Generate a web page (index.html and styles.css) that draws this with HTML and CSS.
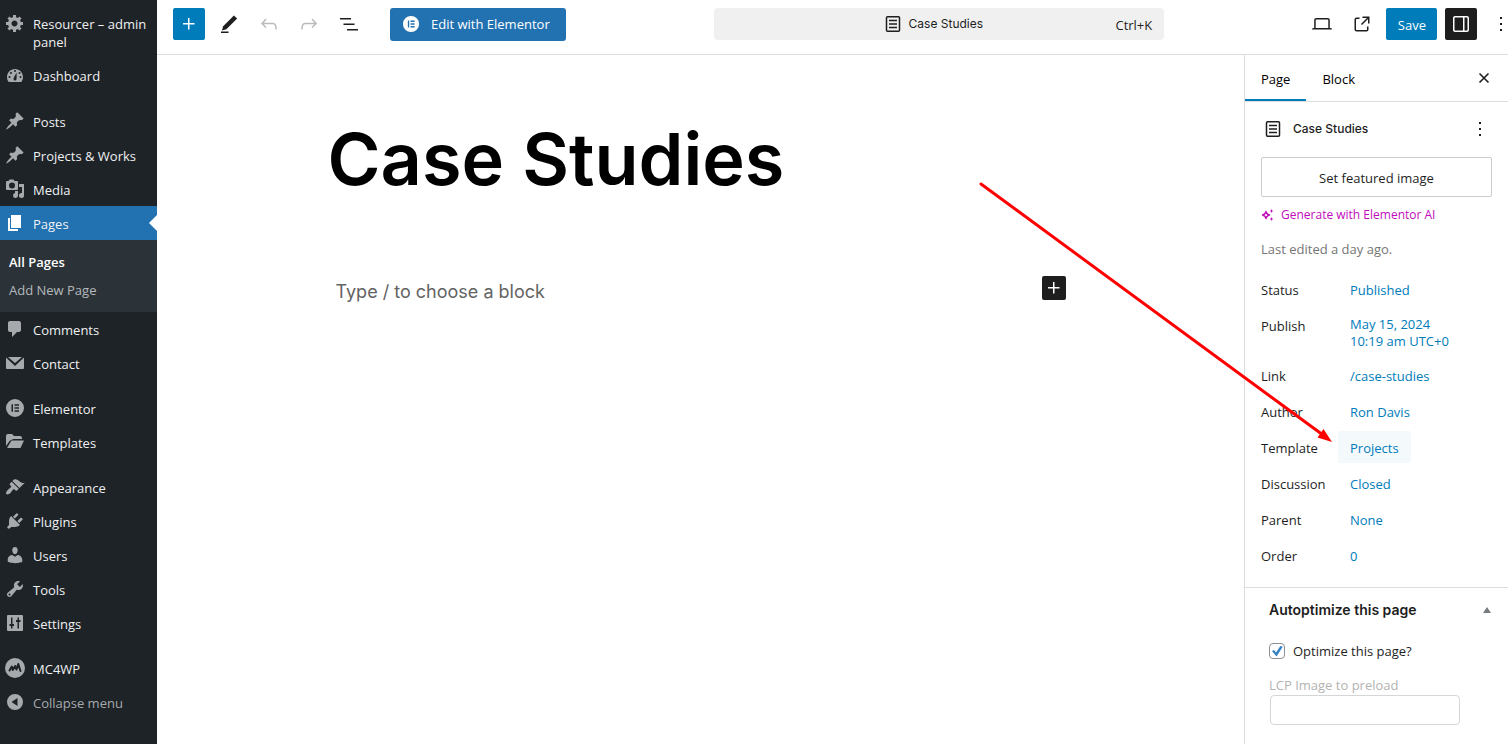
FILE: index.html
```html
<!DOCTYPE html>
<html lang="en">
<head>
<meta charset="utf-8">
<title>Edit Page: Case Studies</title>
<link rel="stylesheet" href="styles.css">
</head>
<body>
<svg class="defs" aria-hidden="true">
  <symbol id="pin" viewBox="0 0 20 20"><path d="M10.44 3.02l1.82-1.82 6.36 6.35-1.83 1.82c-1.05-.68-2.48-.57-3.41.36l-.75.75c-.92.93-1.04 2.35-.35 3.41l-1.83 1.82-2.41-2.41-2.8 2.79c-.42.42-3.38 2.71-3.8 2.29s1.86-3.39 2.28-3.81l2.79-2.79L4.1 9.36l1.83-1.82c1.05.69 2.48.57 3.4-.36l.75-.75c.93-.92 1.05-2.35.36-3.41z"/></symbol>
  <symbol id="page" viewBox="0 0 24 24"><path fill="none" stroke="currentColor" stroke-width="1.5" d="M6.500 4.750h11a1 1 0 0 1 1 1v12.500a1 1 0 0 1-1 1h-11a1 1 0 0 1-1-1V5.750a1 1 0 0 1 1-1zM8 8.500h8M8 12h8M8 15.500h8"/></symbol>
  <symbol id="kebab" viewBox="0 0 24 24"><path d="M13 19h-2v-2h2v2zm0-6h-2v-2h2v2zm0-6h-2V5h2v2z"/></symbol>
  <symbol id="plus" viewBox="0 0 24 24"><path d="M11 12.500V17.500H12.500V12.500H17.500V11H12.500V6H11V11H6V12.500H11Z"/></symbol>
  <symbol id="elementor" viewBox="0 0 20 20"><path fill-rule="evenodd" d="M10 1a9 9 0 1 0 0 18 9 9 0 0 0 0-18zM6.500 6.200h1.500v7.600H6.500zM9.500 6.200h4.500v1.500H9.500zM9.500 9.250h4.500v1.500H9.500zM9.500 12.300h4.500v1.500H9.500z"/></symbol>
</svg>

<nav class="menu" aria-label="Main menu">
  <a class="item site" href="#"><svg viewBox="0 0 20 20"><path fill-rule="evenodd" d="M18 12h-2.180c-.17.700-.44 1.350-.81 1.930l1.540 1.540-2.100 2.100-1.540-1.540c-.58.360-1.230.630-1.910.790V19H8v-2.180c-.68-.160-1.330-.430-1.910-.790l-1.540 1.540-2.120-2.120 1.540-1.540c-.36-.580-.63-1.230-.79-1.910H1V9.030h2.170c.16-.7.440-1.350.8-1.940L2.430 5.550l2.100-2.100 1.540 1.540c.58-.37 1.240-.64 1.930-.81V2h3v2.180c.68.160 1.330.430 1.910.790l1.540-1.540 2.120 2.120-1.540 1.540c.36.590.64 1.240.8 1.940H18V12zm-8.500 1.500c1.660 0 3-1.340 3-3s-1.340-3-3-3-3 1.340-3 3 1.340 3 3 3z"/></svg><span>Resourcer – admin panel</span></a>
  <a class="item" href="#"><svg viewBox="0 0 20 20"><path fill-rule="evenodd" d="M3.760 17h12.480c1.100-1.370 1.760-3.110 1.760-5 0-4.420-3.580-8-8-8s-8 3.580-8 8c0 1.890.66 3.630 1.760 5zM9 6a1 1 0 1 1 2 0 1 1 0 0 1-2 0zM5 8a1 1 0 1 1 2 0 1 1 0 0 1-2 0zm3.500 6c0-1.300 1.500-3 3-6.500.3 3.500.2 5.500 0 6.500a1.500 1.500 0 0 1-3 0zM13.500 8a1 1 0 1 1 2 0 1 1 0 0 1-2 0zM3.500 12a1 1 0 1 1 2 0 1 1 0 0 1-2 0zm11 0a1 1 0 1 1 2 0 1 1 0 0 1-2 0z"/></svg><span>Dashboard</span></a>
  <a class="item gap" href="#"><svg><use href="#pin"/></svg><span>Posts</span></a>
  <a class="item" href="#"><svg><use href="#pin"/></svg><span>Projects &amp; Works</span></a>
  <a class="item" href="#"><svg viewBox="0 0 20 20"><path fill-rule="evenodd" d="M2 2h1.500l1-1.500h4L9.500 2H12a1 1 0 0 1 1 1v7a1 1 0 0 1-1 1H2a1 1 0 0 1-1-1V3a1 1 0 0 1 1-1zm5 1.500a3 3 0 1 0 0 6 3 3 0 0 0 0-6zM14 5h5v11.500a2.500 2.500 0 1 1-2.500-2.500h.5V8h-3zM10 12h3v4.500a2.500 2.500 0 1 1-3-2.400z"/></svg><span>Media</span></a>
  <a class="item current" href="#"><svg viewBox="0 0 20 20"><path d="M6 15V2h10v13H6zm-1 1h8v2H3V5h2v11z"/></svg><span>Pages</span></a>
  <div class="submenu">
    <a class="active" href="#">All Pages</a>
    <a href="#">Add New Page</a>
  </div>
  <a class="item" href="#"><svg viewBox="0 0 20 20"><path d="M5 2h9c1.100 0 2 .9 2 2v7c0 1.100-.9 2-2 2h-2l-5 5v-5H5c-1.100 0-2-.9-2-2V4c0-1.100.9-2 2-2z"/></svg><span>Comments</span></a>
  <a class="item" href="#"><svg viewBox="0 0 20 20"><path d="M3 4h14l-7 6zM1 4.500l9 8.500 9-8.500V15a1 1 0 0 1-1 1H2a1 1 0 0 1-1-1z"/></svg><span>Contact</span></a>
  <a class="item gap" href="#"><svg><use href="#elementor"/></svg><span>Elementor</span></a>
  <a class="item" href="#"><svg viewBox="0 0 20 20"><path d="M1 14V4a2 2 0 0 1 2-2h4l2 2h6a2 2 0 0 1 2 2v1H8.500L5 8.500zM2 16l4.500-7.500H19L15.500 16z"/></svg><span>Templates</span></a>
  <a class="item gap" href="#"><svg viewBox="0 0 20 20"><path d="M14.480 11.060L7.410 3.990l1.500-1.500c.5-.56 2.300-.47 3.510.32 1.210.8 1.430 1.280 2.910 2.100 1.180.64 2.450 1.260 4.450.85zm-.71.710L6.700 4.700 4.930 6.470c-.39.390-.39 1.020 0 1.410l1.060 1.060c.39.390.39 1.030 0 1.420-.6.600-1.430 1.110-2.210 1.690-.35.260-.7.530-1.010.840C1.430 14.230.4 16.080 1.400 17.070c.990 1 2.840-.03 4.180-1.360.31-.31.580-.66.850-1.020.57-.78 1.080-1.610 1.690-2.210.39-.39 1.020-.39 1.410 0l1.060 1.060c.39.390 1.020.39 1.410 0z"/></svg><span>Appearance</span></a>
  <a class="item" href="#"><svg viewBox="0 0 20 20"><path d="M13.110 4.360L9.870 7.600 8 5.730l3.240-3.240c.35-.34 1.050-.2 1.560.32.520.51.660 1.210.31 1.550zm-8 1.770l.91-1.120 9.010 9.010-1.190.84c-.71.710-2.630 1.160-3.820 1.160H6.140L4.900 17.260c-.59.590-1.540.59-2.120 0-.59-.58-.59-1.530 0-2.120l1.240-1.240v-3.880c0-1.130.4-3.190 1.090-3.890zm7.260 3.970l3.240-3.240c.34-.35 1.040-.21 1.550.31.520.51.660 1.210.31 1.550l-3.240 3.250z"/></svg><span>Plugins</span></a>
  <a class="item" href="#"><svg viewBox="0 0 20 20"><path d="M10 9.250c-2.270 0-2.730-3.440-2.730-3.440C7 4.020 7.820 2 9.970 2c2.160 0 2.980 2.020 2.710 3.810 0 0-.41 3.440-2.680 3.440zm0 2.570L12.720 10c2.390 0 4.520 2.330 4.520 4.530v2.490s-3.650 1.130-7.240 1.130c-3.650 0-7.240-1.130-7.240-1.130v-2.490c0-2.250 1.940-4.480 4.470-4.480z"/></svg><span>Users</span></a>
  <a class="item" href="#"><svg viewBox="0 0 20 20"><path d="M16.680 9.770c-1.340 1.340-3.300 1.670-4.950.99l-5.410 6.520c-.99.990-2.590.99-3.580 0s-.99-2.590 0-3.570l6.520-5.420c-.68-1.650-.35-3.610.99-4.950 1.280-1.280 3.120-1.620 4.720-1.060l-2.890 2.890 2.820 2.820 2.860-2.870c.53 1.580.18 3.390-1.080 4.650zM3.810 16.210c.4.390 1.040.39 1.430 0 .4-.4.400-1.040 0-1.430-.39-.4-1.030-.4-1.430 0-.39.390-.39 1.030 0 1.430z"/></svg><span>Tools</span></a>
  <a class="item" href="#"><svg viewBox="0 0 20 20"><path fill-rule="evenodd" d="M18 17V3a1 1 0 0 0-1-1H3a1 1 0 0 0-1 1v14a1 1 0 0 0 1 1h14a1 1 0 0 0 1-1zM6 4.500h1.500V11H9v2H7.500v2.500H6V13H4.500v-2H6zM12.500 4.500H14V7h1.500v2H14v6.500h-1.500V9H11V7h1.500z"/></svg><span>Settings</span></a>
  <a class="item gap" href="#"><svg viewBox="0 0 20 20"><circle cx="10" cy="10" r="10"/><path class="ink" d="M4.500 12.500L6.800 8.500l1 3.500 2.400-4 1.300 3.500L13.300 6l2.200 7"/></svg><span>MC4WP</span></a>
  <button class="item collapse" type="button"><svg viewBox="0 0 20 20"><path fill-rule="evenodd" d="M10 2a8 8 0 1 0 0 16 8 8 0 0 0 0-16zm2.500 4v8L6.500 10z"/></svg><span>Collapse menu</span></button>
</nav>

<div class="editor">
  <header class="topbar">
    <div class="tools">
      <button class="icon-btn primary" type="button" aria-label="Add block"><svg><use href="#plus"/></svg></button>
      <button class="icon-btn" type="button" aria-label="Tools"><svg viewBox="0 0 24 24"><path d="M20.100 6.600L16.900 3.500 6.200 14.200l-1.300 4.400 4.500-1.300z"/><path d="M4 19.500h7.500V21H4z"/></svg></button>
      <button class="icon-btn faded" type="button" aria-label="Undo"><svg viewBox="0 0 24 24"><path d="M18.300 11.700c-.6-.6-1.400-.9-2.300-.9H6.700l2.900-3.300-1.100-1-4.500 5L8.500 16l1-1-2.700-2.700H16c.5 0 .9.200 1.300.5 1 1 1 3.400 1 4.500v.3h1.500v-.2c0-1.500 0-4.300-1.500-5.700z"/></svg></button>
      <button class="icon-btn faded" type="button" aria-label="Redo"><svg viewBox="0 0 24 24"><path d="M15.600 6.500l-1.100 1 2.900 3.300H8c-.9 0-1.700.3-2.300.9-1.400 1.500-1.400 4.200-1.400 5.600v.2h1.500v-.3c0-1.100 0-3.500 1-4.500.3-.3.700-.5 1.300-.5h9.200L14.500 15l1.100 1.100 4.600-4.600-4.600-5z"/></svg></button>
      <button class="icon-btn" type="button" aria-label="Document overview"><svg viewBox="0 0 24 24"><path d="M3 6h11v1.500H3V6Zm3.500 5.500h11V13h-11v-1.500ZM21 17H10v1.500h11V17Z"/></svg></button>
    </div>
    <button class="elementor-btn" type="button"><svg><use href="#elementor"/></svg><span>Edit with Elementor</span></button>
    <button class="command" type="button"><span class="command-title"><svg><use href="#page"/></svg>Case Studies</span><span class="shortcut">Ctrl+K</span></button>
    <div class="actions">
      <button class="icon-btn" type="button" aria-label="View"><svg viewBox="0 0 24 24"><path fill-rule="evenodd" d="M20.500 16h-.7V8c0-1.100-.9-2-2-2H6.200c-1.100 0-2 .9-2 2v8h-.7c-.8 0-1.500.7-1.500 1.500h20c0-.8-.7-1.500-1.500-1.500zM5.700 8c0-.3.2-.5.500-.5h11.600c.3 0 .5.200.5.500v8H5.700V8z"/></svg></button>
      <button class="icon-btn" type="button" aria-label="View page"><svg viewBox="0 0 24 24"><path d="M19.500 4.500h-7V6h4.440l-5.970 5.970 1.060 1.060L18 7.060v4.440h1.500v-7Zm-13 1a2 2 0 0 0-2 2v10a2 2 0 0 0 2 2h10a2 2 0 0 0 2-2v-3H17v3a.5.500 0 0 1-.5.500h-10a.5.500 0 0 1-.5-.5v-10a.5.500 0 0 1 .5-.5h3V5.500h-3Z"/></svg></button>
      <button class="save" type="button">Save</button>
      <button class="icon-btn dark" type="button" aria-label="Settings"><svg viewBox="0 0 24 24"><path fill-rule="evenodd" d="M18 4H6c-1.100 0-2 .9-2 2v12c0 1.100.9 2 2 2h12c1.100 0 2-.9 2-2V6c0-1.100-.9-2-2-2zm-4 14.500H6c-.3 0-.5-.2-.5-.5V6c0-.3.200-.5.500-.5h8v13zm4.500-.5c0 .3-.2.500-.5.500h-2.500v-13H18c.3 0 .5.200.5.500v12z"/></svg></button>
      <button class="icon-btn" type="button" aria-label="Options"><svg><use href="#kebab"/></svg></button>
    </div>
  </header>

  <div class="body">
    <main class="canvas">
      <div class="content">
        <h1>Case Studies</h1>
        <div class="block">
          <p>Type / to choose a block</p>
          <button class="add-block" type="button" aria-label="Add block"><svg><use href="#plus"/></svg></button>
        </div>
      </div>
    </main>

    <aside class="panel">
      <div class="tabs">
        <button class="tab selected" type="button">Page</button>
        <button class="tab" type="button">Block</button>
        <button class="icon-btn close" type="button" aria-label="Close settings"><svg viewBox="0 0 24 24"><path fill="none" stroke="currentColor" stroke-width="1.600" d="M7.500 7.500l9 9M16.500 7.500l-9 9"/></svg></button>
      </div>
      <section class="summary">
        <div class="card">
          <svg><use href="#page"/></svg><h2>Case Studies</h2>
          <button class="icon-btn" type="button" aria-label="Actions"><svg><use href="#kebab"/></svg></button>
        </div>
        <button class="featured" type="button">Set featured image</button>
        <button class="ai" type="button"><svg viewBox="0 0 14 14"><path fill="none" stroke="currentColor" stroke-width="1.300" stroke-linejoin="round" d="M5 3.500c.4 2 1.300 3 3.500 3.500C6.300 7.500 5.400 8.500 5 10.500 4.600 8.500 3.700 7.500 1.500 7 3.700 6.500 4.600 5.500 5 3.500z"/><path d="M10.500 1l.6 1.400 1.400.6-1.400.6-.6 1.400-.6-1.400L8.500 3l1.400-.6zM10.500 9l.6 1.400 1.400.6-1.400.6-.6 1.400-.6-1.400-1.400-.6 1.400-.6z"/></svg><span>Generate with Elementor AI</span></button>
        <p class="edited">Last edited a day ago.</p>
        <dl class="fields">
          <div><dt>Status</dt><dd><button type="button">Published</button></dd></div>
          <div class="tall"><dt>Publish</dt><dd><button type="button">May 15, 2024<br>10:19 am UTC+0</button></dd></div>
          <div><dt>Link</dt><dd><button type="button">/case-studies</button></dd></div>
          <div><dt>Author</dt><dd><button type="button">Ron Davis</button></dd></div>
          <div><dt>Template</dt><dd><button class="hover" type="button">Projects</button></dd></div>
          <div><dt>Discussion</dt><dd><button type="button">Closed</button></dd></div>
          <div><dt>Parent</dt><dd><button type="button">None</button></dd></div>
          <div><dt>Order</dt><dd><button type="button">0</button></dd></div>
        </dl>
      </section>
      <section class="metabox">
        <div class="metabox-head"><h2>Autoptimize this page</h2><svg viewBox="0 0 10 8"><path d="M5 1l4 6H1z"/></svg></div>
        <label class="check"><input type="checkbox" checked>Optimize this page?</label>
        <div class="lcp"><label for="lcp">LCP Image to preload</label><input id="lcp" type="text"></div>
      </section>
    </aside>
  </div>
</div>

<svg class="arrow" viewBox="0 0 354 262" aria-hidden="true"><path class="shaft" d="M2 2L344 253"/><path d="M353 260l-14.500-4.500 6-8.500z"/></svg>
</body>
</html>
```
FILE: styles.css
```css
* { box-sizing: border-box; }
body {
  margin: 0;
  min-height: 100vh;
  display: flex;
  position: relative;
  overflow: hidden;
  background: #fff;
  color: #1e1e1e;
  font: 13px/18px "Open Sans", "Noto Sans", sans-serif;
}
button { font: inherit; color: inherit; background: none; border: 0; padding: 0; }
a { color: inherit; text-decoration: none; }
h1, h2, p, dl, dd { margin: 0; }
svg { fill: currentColor; flex: none; width: 24px; height: 24px; }
.defs { position: absolute; width: 0; height: 0; }

/* Admin menu */
.menu {
  flex: 0 0 157px;
  padding-top: 6px;
  background: #1d2327;
  color: #f0f0f1;
}
.item {
  display: flex;
  gap: 8px;
  width: 100%;
  padding: 9px 8px 7px 5px;
  line-height: 18px;
  text-align: left;
  position: relative;
}
.item svg { width: 20px; height: 20px; margin: -2px 0 0; color: #a7aaad; }
.item.gap { margin-top: 12px; }
.submenu ~ .item.gap { margin-top: 11px; }
.item.current { background: #2271b1; }
.item.current svg { color: #fff; }
.item.current::after {
  content: "";
  position: absolute;
  right: 0;
  top: 9px;
  border: 8px solid transparent;
  border-left-width: 0;
  border-right-color: #fff;
}
.item.site { padding-right: 0; }
.collapse { color: #a7aaad; }
.ink { fill: none; stroke: #1d2327; stroke-width: 2; stroke-linejoin: round; stroke-linecap: round; }
.submenu { padding: 8px 9px; background: #2c3338; }
.submenu a { display: block; padding: 5px 0; color: #b4b8bc; }
.submenu .active { color: #fff; font-weight: 600; }

/* Top bar */
.editor { flex: 1; min-width: 0; display: flex; flex-direction: column; }
.topbar {
  display: flex;
  align-items: center;
  height: 55px;
  padding: 0 0 6px 16px;
  border-bottom: 1px solid #ddd;
}
.tools { display: flex; gap: 8px; }
.icon-btn {
  flex: none;
  display: flex;
  align-items: center;
  justify-content: center;
  width: 32px;
  height: 32px;
  border-radius: 2px;
}
.primary, .save { background: #007cba; color: #fff; }
.dark { background: #1e1e1e; color: #fff; }
.faded { color: #bbb; }
.elementor-btn {
  display: flex;
  align-items: center;
  gap: 11px;
  height: 33px;
  margin: 0 7px 0 25px;
  padding: 0 16px 0 12px;
  border-radius: 3px;
  background: #2271b1;
  color: #fff;
}
.elementor-btn svg { width: 18px; height: 18px; }
.command {
  display: flex;
  align-items: center;
  width: 450px;
  height: 32px;
  margin: 0 auto;
  padding: 0 12px;
  border-radius: 4px;
  background: #f0f0f0;
}
.command-title {
  flex: 1;
  display: flex;
  align-items: center;
  justify-content: center;
  gap: 4px;
  padding-left: 22px;
  font: 12px/18px Inter, sans-serif;
}
.shortcut { padding-top: 2px; }
.actions { display: flex; gap: 8px; margin-right: -9px; }
.save { height: 32px; padding: 2px 11px 0 12px; border-radius: 2px; }

/* Canvas */
.body { flex: 1; display: flex; }
.canvas { flex: 1; min-width: 0; font-family: Inter, sans-serif; }
.content { max-width: 746px; margin: 0 auto; padding-top: 59px; }
h1 { font-size: 72px; line-height: 90px; font-weight: 600; color: #000; }
.block {
  display: flex;
  justify-content: space-between;
  align-items: flex-start;
  padding: 72px 8px 0;
}
.block p { padding-top: 4px; font-size: 18px; line-height: 24px; color: #636363; }
.add-block { width: 24px; height: 24px; border-radius: 2px; background: #1e1e1e; color: #fff; }

/* Settings panel */
.panel { flex: 0 0 264px; border-left: 1px solid #ddd; }
.tabs { display: flex; align-items: center; height: 47px; border-bottom: 1px solid #ddd; }
.tab { align-self: stretch; padding: 4px 16px 0; border-bottom: 2px solid transparent; color: #000; }
.tab.selected { border-bottom-color: #007cba; }
.close { margin-left: auto; margin-right: 8px; }
.summary { padding: 11px 16px 16px; border-bottom: 1px solid #ddd; }
.card { display: flex; align-items: center; gap: 8px; height: 32px; margin-right: -4px; }
.card h2 { flex: 1; font: 500 12px/18px Inter, sans-serif; }
.featured {
  display: block;
  width: 100%;
  height: 40px;
  margin-top: 12px;
  padding-top: 2px;
  border: 1px solid #ccc;
  border-radius: 2px;
}
.ai { display: flex; align-items: center; gap: 6px; margin-top: 9px; font-size: 12px; color: #c00bb9; }
.ai svg { width: 14px; height: 14px; }
.edited { margin-top: 16px; color: #757575; }
.fields { display: grid; gap: 4px; margin-top: 15px; }
.fields div { display: flex; }
.fields dt { width: 77px; padding: 8px 0 6px; }
.fields button {
  min-height: 32px;
  padding: 2px 12px 0;
  border-radius: 2px;
  line-height: 17px;
  text-align: left;
  color: #007cba;
}
.tall { padding-bottom: 11px; }
.tall dd { padding-top: 5px; margin-bottom: -6px; }
.tall dt { padding-bottom: 0; }
.fields .hover { background: #f4f9fc; }
.metabox { padding: 12px 16px 20px 24px; }
.metabox-head { display: flex; align-items: center; justify-content: space-between; }
.metabox h2 { font: 600 14px/20px Inter, sans-serif; }
.metabox-head svg { width: 10px; height: 8px; color: #787c82; }
.check { display: flex; align-items: center; gap: 8px; margin-top: 22px; }
.check input {
  appearance: none;
  width: 16px;
  height: 16px;
  margin: 0;
  border: 1px solid #8c8f94;
  border-radius: 4px;
  display: grid;
  place-items: center;
}
.check input::before {
  content: "";
  width: 12px;
  height: 12px;
  background: #3582c4;
  clip-path: polygon(8% 50%, 26% 42%, 42% 62%, 78% 8%, 98% 14%, 46% 96%);
}
.lcp { margin-top: 16px; color: #b3b3b3; }
.lcp label { display: block; }
.lcp input {
  display: block;
  width: 190px;
  height: 30px;
  margin: 1px;
  padding: 0 8px;
  border: 1px solid #d5d6d8;
  border-radius: 4px;
  background: #fff;
  font: inherit;
}

/* Annotation pointing at the template value */
.arrow { position: absolute; top: 182px; right: 175px; width: 354px; height: 262px; color: #f00; pointer-events: none; }
.shaft { stroke: currentColor; stroke-width: 3; stroke-linecap: round; }
```
